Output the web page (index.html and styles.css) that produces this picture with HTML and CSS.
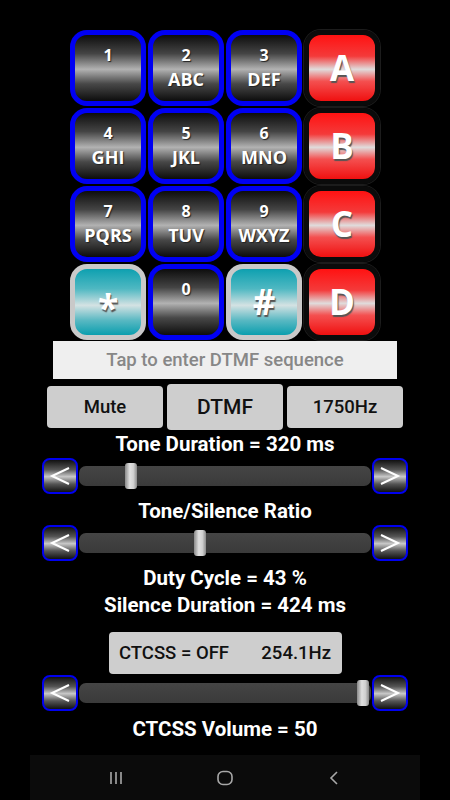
FILE: index.html
```html
<!DOCTYPE html>
<html lang="en">
<head>
  <meta charset="UTF-8">
  <meta name="viewport" content="width=device-width, initial-scale=1.0">
  <title>DTMF Generator</title>
  <link rel="stylesheet" href="styles.css">
</head>
<body>
  <div class="keypad">
    <div class="key"><span class="num">1</span></div>
    <div class="key"><span class="num">2</span><span class="sub">ABC</span></div>
    <div class="key"><span class="num">3</span><span class="sub">DEF</span></div>
    <div class="key red"><span class="big">A</span></div>

    <div class="key"><span class="num">4</span><span class="sub">GHI</span></div>
    <div class="key"><span class="num">5</span><span class="sub">JKL</span></div>
    <div class="key"><span class="num">6</span><span class="sub">MNO</span></div>
    <div class="key red"><span class="big">B</span></div>

    <div class="key"><span class="num">7</span><span class="sub">PQRS</span></div>
    <div class="key"><span class="num">8</span><span class="sub">TUV</span></div>
    <div class="key"><span class="num">9</span><span class="sub">WXYZ</span></div>
    <div class="key red"><span class="big">C</span></div>

    <div class="key cyan"><span class="big star">*</span></div>
    <div class="key"><span class="num">0</span></div>
    <div class="key cyan"><span class="big">#</span></div>
    <div class="key red"><span class="big">D</span></div>
  </div>

  <div class="sequence">Tap to enter DTMF sequence</div>

  <div class="modes">
    <button class="mode">Mute</button>
    <button class="mode active">DTMF</button>
    <button class="mode">1750Hz</button>
  </div>

  <div class="label first">Tone Duration = 320 ms</div>
  <div class="slider">
    <div class="step"><svg width="22" height="22" viewBox="0 0 22 22"><polyline points="20,3 3,11 20,19" /></svg></div>
    <div class="track"><div class="thumb" style="left: 46px"></div></div>
    <div class="step"><svg width="22" height="22" viewBox="0 0 22 22"><polyline points="2,3 19,11 2,19" /></svg></div>
  </div>

  <div class="label">Tone/Silence Ratio</div>
  <div class="slider">
    <div class="step"><svg width="22" height="22" viewBox="0 0 22 22"><polyline points="20,3 3,11 20,19" /></svg></div>
    <div class="track"><div class="thumb" style="left: 115px"></div></div>
    <div class="step"><svg width="22" height="22" viewBox="0 0 22 22"><polyline points="2,3 19,11 2,19" /></svg></div>
  </div>

  <div class="info">
    <div>Duty Cycle = 43 %</div>
    <div>Silence Duration = 424 ms</div>
  </div>

  <div class="ctcss">
    <span>CTCSS = OFF</span>
    <span>254.1Hz</span>
  </div>

  <div class="slider">
    <div class="step"><svg width="22" height="22" viewBox="0 0 22 22"><polyline points="20,3 3,11 20,19" /></svg></div>
    <div class="track"><div class="thumb" style="left: 278px"></div></div>
    <div class="step"><svg width="22" height="22" viewBox="0 0 22 22"><polyline points="2,3 19,11 2,19" /></svg></div>
  </div>

  <div class="label last">CTCSS Volume = 50</div>

  <div class="navbar">
    <svg width="16" height="16" viewBox="0 0 16 16"><path d="M3 2v12M8 2v12M13 2v12" /></svg>
    <svg width="18" height="16" viewBox="0 0 18 16"><rect x="2" y="1.5" width="14" height="13" rx="5" /></svg>
    <svg width="16" height="16" viewBox="0 0 16 16"><polyline points="11,2 5,8 11,14" /></svg>
  </div>
</body>
</html>
```

FILE: styles.css
```css
body { margin: 0; background: #000; font-family: Roboto, "Liberation Sans", sans-serif; color: #fff; width: 450px; height: 800px; overflow: hidden; }

.keypad { display: grid; grid-template-columns: repeat(4, 76px); grid-auto-rows: 76px; gap: 2px; margin: 30px 0 0 70px; }
.key { box-sizing: border-box; border: 5px solid #0000f4; border-radius: 17px; background: linear-gradient(to bottom, #0d0d0d 0%, #444 28%, #b2b2b2 52%, #484848 74%, #0d0d0d 100%); display: flex; flex-direction: column; align-items: center; font-family: "Open Sans", "DejaVu Sans", sans-serif; font-weight: 700; text-shadow: 1px 1px 1px #222; padding-top: 9px; }
.key .num { font-size: 16px; line-height: 22px; }
.key .sub { font-size: 18px; line-height: 26px; }
.key.red { border-color: #0b0b0b; background: linear-gradient(to bottom, #ff1212 0%, #f43a3a 32%, #e0dcdc 52%, #f45050 70%, #f01010 100%); box-shadow: 0 0 0 1px #1c1c1c; justify-content: center; padding-top: 0; }
.key.cyan { border-color: #c9c9c9; background: linear-gradient(to bottom, #0ea0b0 0%, #4fb8c2 30%, #d4e2e3 55%, #58b8c2 78%, #0a9eae 100%); justify-content: center; padding-top: 0; }
.key .big { font-size: 35px; line-height: 40px; text-shadow: 1px 2px 1px #555; }
.key .star { font-size: 38px; margin-top: 10px; }

.sequence { box-sizing: border-box; width: 344px; height: 38px; margin: 1px 0 0 53px; background: #efefef; color: #878787; font-size: 18.5px; font-weight: 500; display: flex; align-items: center; justify-content: center; }

.modes { display: flex; align-items: center; gap: 4px; margin: 5px 0 0 47px; width: 356px; height: 46px; }
.mode { flex: 1; height: 42px; border: 0; border-radius: 4px; background: #cecece; color: #111; font-family: Roboto, "Liberation Sans", sans-serif; font-size: 18.5px; font-weight: 500; padding: 0; }
.mode.active { height: 46px; font-size: 21px; }

.label { font-size: 20.5px; font-weight: 700; line-height: 22px; text-align: center; margin-top: 6px; }
.label.first { margin-top: 3px; }
.label.last { margin-top: 7px; }

.slider { display: flex; align-items: center; margin: 3px 0 0 42px; width: 366px; height: 36px; }
.step { box-sizing: border-box; width: 36px; height: 36px; border: 2px solid #0000f0; border-radius: 8px; background: linear-gradient(to bottom, #111 0%, #555 30%, #c8c8c8 52%, #555 75%, #111 100%); display: flex; align-items: center; justify-content: center; flex-shrink: 0; }
.step polyline { fill: none; stroke: #fff; stroke-width: 2; }
.track { position: relative; flex: 1; height: 20px; margin: 0 1px; border-radius: 7px; background: linear-gradient(to bottom, #454545, #3a3a3a); }
.thumb { position: absolute; top: -3px; width: 12px; height: 26px; border-radius: 3px; background: linear-gradient(to right, #8a8a8a, #e0e0e0 40%, #d0d0d0 70%, #8a8a8a); }

.info { font-size: 20.5px; font-weight: 700; line-height: 27px; text-align: center; margin-top: 4px; }

.ctcss { box-sizing: border-box; width: 233px; height: 42px; margin: 13px 0 0 109px; background: #cecece; border-radius: 4px; color: #111; font-size: 18.5px; font-weight: 500; display: flex; align-items: center; justify-content: space-between; padding: 0 11px 0 10px; }
.ctcss + .slider { margin-top: 1px; }

.navbar { width: 390px; height: 45px; margin: 15px 0 0 30px; background: #0b0b0b; display: flex; align-items: center; justify-content: center; gap: 92px; }
.navbar svg { fill: none; stroke: #a8a8a8; stroke-width: 1.6; }
```
